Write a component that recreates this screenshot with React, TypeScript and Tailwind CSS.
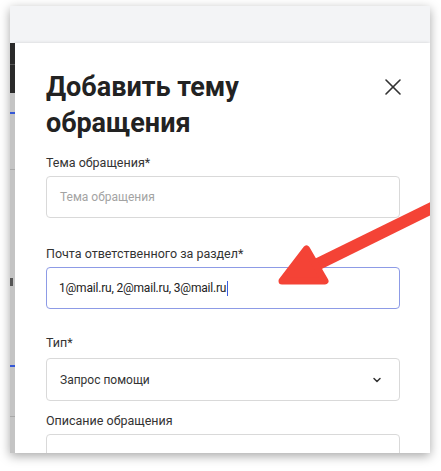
import { X, ChevronDown } from "lucide-react";

const font = { fontFamily: "Roboto, 'Noto Sans', sans-serif" };

const Strip = () => (
  <div className="relative w-[5px] shrink-0 bg-[#c4c4c4]">
    <div className="h-[50px] bg-[#2a2a2a] pt-[21px]">
      <div className="h-px bg-[#555]" />
    </div>
    <div className="mt-[19px] h-[2px] bg-[#3558d6]" />
    <div className="mt-[55px] h-px bg-[#a8a8a8]" />
    <div className="mt-[108px] h-[8px] w-[3px] bg-[#555]" />
    <div className="mt-[79px] h-[2px] bg-[#3558d6]" />
    <div className="mt-[49px] h-px bg-[#a8a8a8]" />
  </div>
);

export default function App() {
  return (
    <div className="h-[471px] w-[441px] bg-white pt-[6px]" style={font}>
      <div className="relative ml-[10px] flex h-[447px] w-[420px] flex-col overflow-hidden shadow-[0_3px_10px_rgba(0,0,0,0.35)]">
        <div className="h-[37px] shrink-0 bg-[#f3f4f6]" />
        <div className="flex flex-1">
          <Strip />
          <div className="flex-1 bg-white pl-[31px] pr-[30px] pt-[26px] shadow-[-1px_0_3px_rgba(0,0,0,0.15)]">
            <div className="flex items-start justify-between">
              <h1 className="text-[27px] font-bold leading-[36px] text-[#222]">
                Добавить тему
                <br />
                обращения
              </h1>
              <X size={28} strokeWidth={1.4} className="mr-[-7px] mt-[4px] text-[#333]" />
            </div>

            <label className="mt-[14px] block text-[12.5px] leading-[16px] text-[#333]">Тема обращения*</label>
            <div className="mt-[5px] flex h-[42px] items-center rounded-[4px] border border-[#d9d9d9] px-[13px] text-[12px] text-[#a3a3a3]">
              Тема обращения
            </div>

            <label className="mt-[28px] block text-[12.5px] leading-[16px] text-[#333]">
              Почта ответственного за раздел*
            </label>
            <div className="mt-[5px] flex h-[42px] items-center rounded-[4px] border border-[#8d9be6] px-[12px] text-[12px] tracking-[-0.2px] text-[#222]">
              1@mail.ru, 2@mail.ru, 3@mail.ru
              <span className="ml-px h-[15px] w-px bg-[#3d5ce0]" />
            </div>

            <label className="mt-[26px] block text-[12.5px] leading-[16px] text-[#333]">Тип*</label>
            <div className="mt-[7px] flex h-[43px] items-center justify-between rounded-[4px] border border-[#d9d9d9] pl-[13px] pr-[16px] text-[12px] text-[#333]">
              Запрос помощи
              <ChevronDown size={12} strokeWidth={3} className="text-[#333]" />
            </div>

            <label className="mt-[12px] block text-[12.5px] leading-[16px] text-[#333]">Описание обращения</label>
            <div className="mt-[5px] h-[60px] rounded-[4px] border border-[#d9d9d9]" />
          </div>
        </div>

        <svg className="pointer-events-none absolute inset-0" width="420" height="447" viewBox="10 6 420 447">
          <line x1="316" y1="265" x2="450" y2="199" stroke="#f44336" strokeWidth="12" />
          <polygon
            points="282,281 306.5,249 325,281"
            fill="#f44336"
            stroke="#f44336"
            strokeWidth="7"
            strokeLinejoin="round"
          />
        </svg>
      </div>
    </div>
  );
}
